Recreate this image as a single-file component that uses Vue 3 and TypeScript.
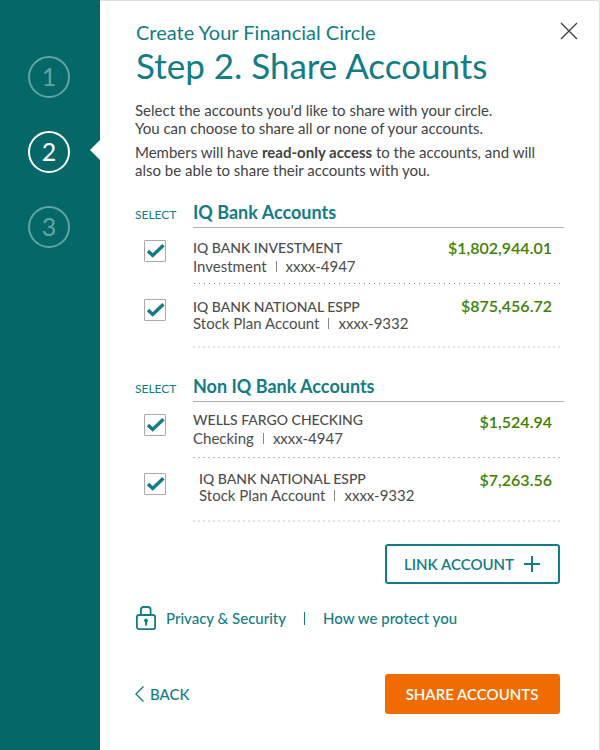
<script setup lang="ts">
import { reactive, ref } from 'vue'

interface Account {
  id: string
  name: string
  kind: string
  mask: string
  balance: string
  selected: boolean
}

interface AccountGroup {
  id: string
  title: string
  accounts: Account[]
}

const steps = [1, 2, 3]
const currentStep = ref(2)

const groups = reactive<AccountGroup[]>([
  {
    id: 'iq',
    title: 'IQ Bank Accounts',
    accounts: [
      { id: 'iq-inv', name: 'IQ BANK INVESTMENT', kind: 'Investment', mask: 'xxxx-4947', balance: '$1,802,944.01', selected: true },
      { id: 'iq-espp', name: 'IQ BANK NATIONAL ESPP', kind: 'Stock Plan Account', mask: 'xxxx-9332', balance: '$875,456.72', selected: true },
    ],
  },
  {
    id: 'non-iq',
    title: 'Non IQ Bank Accounts',
    accounts: [
      { id: 'wf-chk', name: 'WELLS FARGO CHECKING', kind: 'Checking', mask: 'xxxx-4947', balance: '$1,524.94', selected: true },
      { id: 'ext-espp', name: 'IQ BANK NATIONAL ESPP', kind: 'Stock Plan Account', mask: 'xxxx-9332', balance: '$7,263.56', selected: true },
    ],
  },
])
</script>

<template>
  <div class="dialog">
    <nav class="rail">
      <ol class="steps">
        <li v-for="step in steps" :key="step" class="step" :class="{ current: step === currentStep }">
          <span class="bubble">{{ step }}</span>
        </li>
      </ol>
    </nav>

    <main class="panel">
      <header class="head">
        <div>
          <p class="eyebrow">Create Your Financial Circle</p>
          <h1 class="title">Step 2. Share Accounts</h1>
        </div>
        <button class="close" type="button">
          <svg width="18" height="18" viewBox="0 0 18 18"><path d="M1 1L17 17M17 1L1 17" fill="none" stroke="#444" stroke-width="1.4" /></svg>
        </button>
      </header>

      <div class="intro">
        <p>Select the accounts you'd like to share with your circle.<br />You can choose to share all or none of your accounts.</p>
        <p>Members will have <strong>read-only access</strong> to the accounts, and will<br />also be able to share their accounts with you.</p>
      </div>

      <section v-for="group in groups" :key="group.id" class="group" :class="group.id">
        <div class="group-head">
          <span class="select">SELECT</span>
          <h2>{{ group.title }}</h2>
        </div>
        <div v-for="account in group.accounts" :key="account.id" class="row">
          <div class="check">
            <input :id="account.id" v-model="account.selected" type="checkbox" />
            <svg v-if="account.selected" class="tick" width="22" height="22" viewBox="0 0 22 22"><path d="M4 11L8.7 15.5L19.4 5.2" fill="none" stroke="#127d85" stroke-width="3.4" /></svg>
          </div>
          <div class="body">
            <label class="names" :for="account.id">
              <span class="name">{{ account.name }}</span>
              <span class="detail"><span>{{ account.kind }}</span><span class="bar"></span><span>{{ account.mask }}</span></span>
            </label>
            <span class="balance">{{ account.balance }}</span>
          </div>
        </div>
      </section>

      <div class="link-row">
        <button class="btn outline" type="button">
          LINK ACCOUNT
          <svg width="16" height="16" viewBox="0 0 16 16"><path d="M8 0V16M0 8H16" fill="none" stroke="#127d85" stroke-width="2" /></svg>
        </button>
      </div>

      <div class="privacy">
        <svg width="22" height="26" viewBox="0 0 22 26">
          <g fill="none" stroke="#127d85" stroke-width="1.8">
            <rect x="1.9" y="10" width="18.2" height="14.1" rx="2.2" />
            <path d="M5.9 9.6V4.8Q5.9 2 8.7 2H12.8Q15.6 2 15.6 4.8V9.6" />
          </g>
          <path d="M11 13.6a2 2 0 0 1 1 3.7V20.4h-2v-3.1a2 2 0 0 1 1-3.7Z" fill="#127d85" />
        </svg>
        <a href="#privacy">Privacy &amp; Security</a>
        <span class="sep"></span>
        <a href="#protect">How we protect you</a>
      </div>

      <footer class="foot">
        <a class="back" href="#back">
          <svg width="10" height="18" viewBox="0 0 10 18"><path d="M8.5 1.5L1 9L8.5 16.5" fill="none" stroke="#127d85" stroke-width="1.4" /></svg>
          BACK
        </a>
        <button class="btn solid" type="button">SHARE ACCOUNTS</button>
      </footer>
    </main>
  </div>
</template>

<style>
body {
  background: #fff;
}
</style>

<style scoped>
.dialog {
  display: grid;
  grid-template-columns: 100px minmax(0, 1fr);
  min-height: 100vh;
  box-sizing: border-box;
  font-family: Lato, "Liberation Sans", sans-serif;
  color: #444;
}
.dialog * {
  box-sizing: border-box;
}
p, h1, h2, ol {
  margin: 0;
  padding: 0;
}
a {
  color: inherit;
  text-decoration: none;
}
svg {
  display: block;
  flex: none;
}
.rail {
  background: #056868;
  padding-top: 56px;
}
.steps {
  list-style: none;
  display: grid;
  gap: 33px;
}
.step {
  position: relative;
  padding-left: 28px;
}
.bubble {
  display: grid;
  place-items: center;
  width: 42px;
  height: 42px;
  border: 2px solid #65a2a2;
  border-radius: 50%;
  color: #65a2a2;
  font-size: 25px;
  line-height: 36px;
  padding-bottom: 2px;
}
.current .bubble {
  border-color: #fff;
  color: #fff;
}
.current::after {
  content: "";
  position: absolute;
  right: 0;
  top: 9px;
  border: 10px solid transparent;
  border-left-width: 0;
  border-right-color: #fff;
}
.panel {
  border-top: 1px solid #dedede;
  border-right: 1px solid #dedede;
  border-top-right-radius: 3px;
  padding: 18px 35px 36px;
}
.head {
  display: flex;
  justify-content: space-between;
  color: #127d85;
}
.head > div {
  padding-left: 1px;
}
.eyebrow {
  font-size: 20px;
  line-height: 26px;
}
.title {
  font-size: 35px;
  line-height: 40px;
  font-weight: 400;
}
.close {
  align-self: flex-start;
  margin: 3px -14px 0 0;
  padding: 0;
  border: 0;
  background: none;
}
.intro {
  display: grid;
  gap: 6px;
  padding-top: 16px;
  font-size: 15px;
  line-height: 18px;
  white-space: nowrap;
}
.group {
  color: #4d4d4d;
}
.group-head {
  display: grid;
  grid-template-columns: 58px minmax(0, 1fr);
  align-items: baseline;
  margin-top: 18px;
  color: #127d85;
}
.group + .group .group-head {
  margin-top: 23px;
}
.select {
  font-size: 12px;
}
h2 {
  font-size: 18px;
  line-height: 30px;
  font-weight: 700;
  border-bottom: 1px solid #b0b0b0;
}
.row {
  display: grid;
  grid-template-columns: 58px minmax(0, 1fr);
}
.check {
  position: relative;
  padding: 12px 0 0 9px;
}
.check input {
  display: block;
  appearance: none;
  width: 22px;
  height: 22px;
  margin: 0;
  border: 1px solid #aaa;
  border-radius: 1px;
}
.tick {
  position: absolute;
  left: 9px;
  top: 12px;
  pointer-events: none;
}
.body {
  display: flex;
  justify-content: space-between;
  height: 56px;
  margin-right: 3px;
  padding: 11px 9px 0 0;
  background: repeating-linear-gradient(90deg, transparent 0 1px, #888 1px 2px, transparent 2px 5px) bottom / 100% 1px no-repeat;
}
.non-iq .body {
  background-image: repeating-linear-gradient(90deg, #bbb 0 2px, transparent 2px 5px);
}
.row:last-child .body {
  height: 64px;
  padding-top: 14px;
  background: repeating-linear-gradient(90deg, #e2e2e2 0 2px, transparent 2px 5px) bottom / 100% 2px no-repeat;
}
.row:last-child .check {
  padding-top: 15px;
}
.row:last-child .tick {
  top: 15px;
}
.names {
  display: flex;
  flex-direction: column;
  font-size: 14px;
  line-height: 18px;
}
.non-iq .names {
  margin-top: -2px;
}
.non-iq .row:last-child .names {
  padding-left: 6px;
}
.row:last-child .names {
  line-height: 17px;
}
.name {
  font-weight: 500;
}
.detail {
  display: flex;
  align-items: center;
  font-size: 15px;
}
.bar {
  width: 1px;
  height: 11px;
  margin: 0 9px;
  background: #888;
}
.balance {
  font-size: 16px;
  line-height: 18px;
  font-weight: 600;
  color: #3d8200;
}
.row:last-child .balance {
  margin-top: -1px;
}
.btn {
  display: flex;
  align-items: center;
  justify-content: space-between;
  width: 175px;
  height: 40px;
  padding: 0 18px 0 17px;
  border: 2px solid #127d85;
  border-radius: 3px;
  background: #fff;
  color: #127d85;
  font: 600 15px/20px Lato, "Liberation Sans", sans-serif;
  white-space: nowrap;
}
.solid {
  justify-content: center;
  border-color: #f06c00;
  background: #f06c00;
  color: #fff;
}
.link-row {
  display: flex;
  justify-content: flex-end;
  padding: 22px 4px 0 0;
}
.privacy {
  display: flex;
  align-items: center;
  margin-top: 21px;
  font-size: 15px;
  line-height: 18px;
  font-weight: 500;
  color: #127d85;
}
.privacy a:first-of-type {
  margin-left: 9px;
}
.sep {
  width: 1px;
  height: 13px;
  margin: 0 18px;
  background: #127d85;
}
.foot {
  display: flex;
  align-items: center;
  justify-content: space-between;
  margin-top: 43px;
  padding-right: 4px;
  color: #127d85;
}
.back {
  display: flex;
  align-items: center;
  gap: 5px;
  font-size: 15px;
  line-height: 20px;
  font-weight: 500;
}
</style>
